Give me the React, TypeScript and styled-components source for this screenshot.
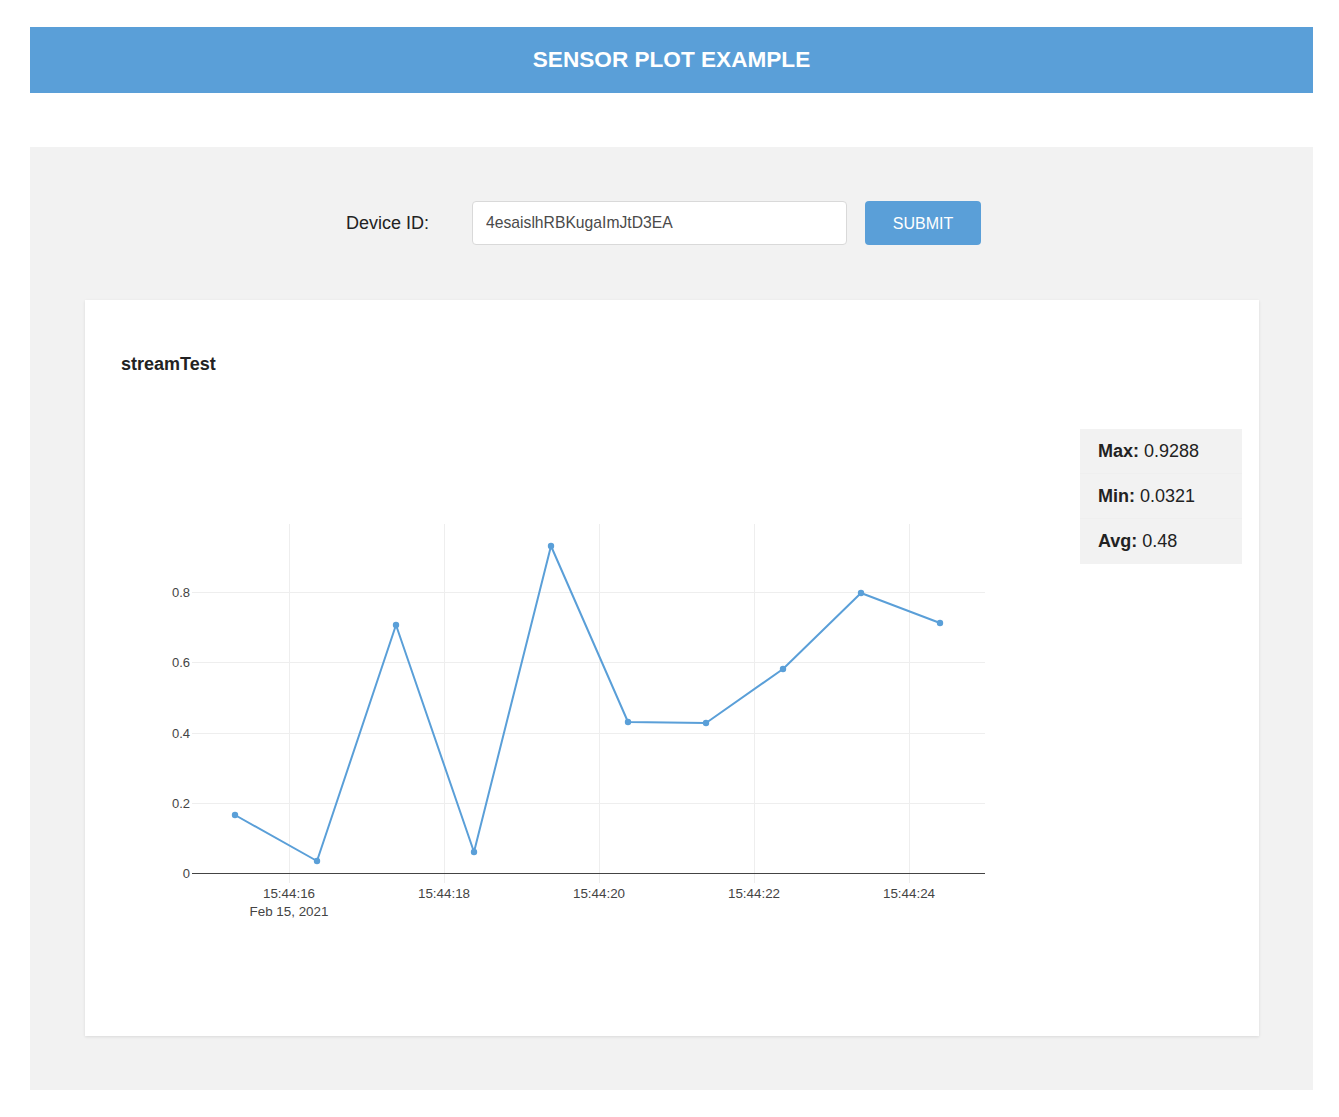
import React from "react";
import styled, { createGlobalStyle } from "styled-components";

const Global = createGlobalStyle`
  html, body { margin: 0; padding: 0; background: #fff; }
  body { font-family: "Liberation Sans", Arial, sans-serif; color: #222; }
`;

const Page = styled.div`
  padding: 27px 26px 27px 30px;
`;

const Header = styled.header`
  height: 66px;
  background: #5a9fd8;
  display: flex;
  align-items: center;
  justify-content: center;
  color: #fff;
  font-size: 22.6px;
  font-weight: 700;
  padding-bottom: 1px;
  box-sizing: border-box;
`;

const Panel = styled.main`
  margin-top: 54px;
  background: #f2f2f2;
  padding: 54px 54px 54px 55px;
`;

const FormRow = styled.form`
  display: flex;
  align-items: center;
  padding-left: 261px;
  height: 44px;
  margin-bottom: 55px;
`;

const Label = styled.label`
  font-size: 18px;
  color: #222;
  margin-right: 43px;
`;

const Input = styled.input`
  box-sizing: border-box;
  width: 375px;
  height: 44px;
  border: 1px solid #d9d9d9;
  border-radius: 4px;
  background: #fff;
  padding: 0 13px;
  font-family: "Liberation Sans", Arial, sans-serif;
  font-size: 15.7px;
  color: #4a4a4a;
  outline: none;
`;

const Button = styled.button`
  margin-left: 18px;
  width: 116px;
  height: 44px;
  border: none;
  border-radius: 4px;
  background: #5a9fd8;
  color: #fff;
  font-family: "Liberation Sans", Arial, sans-serif;
  font-size: 16px;
  padding-top: 2px;
`;

const Card = styled.section`
  background: #fff;
  height: 736px;
  box-sizing: border-box;
  padding: 53px 17px 0 36px;
  box-shadow: 0 1px 3px rgba(0, 0, 0, 0.1);
`;

const Title = styled.h2`
  margin: 0;
  font-size: 18px;
  font-weight: 700;
  line-height: 22px;
  color: #222;
`;

const Body = styled.div`
  display: flex;
  justify-content: space-between;
  align-items: flex-start;
  margin-top: 25px;
`;

const Stats = styled.ul`
  list-style: none;
  margin: 29px 0 0;
  padding: 0;
  width: 162px;
  background: #f2f2f2;
`;

const StatRow = styled.li<{ $last?: boolean }>`
  height: 45px;
  box-sizing: border-box;
  padding-left: 18px;
  display: flex;
  align-items: center;
  font-size: 18px;
  color: #222;
  border-bottom: ${(p) => (p.$last ? "none" : "1px solid #efefef")};
  b { margin-right: 5px; }
`;

const COLOR = "#5a9fd8";
const y0 = 473;
const perUnit = 351.25;
const yTicks = [0, 0.2, 0.4, 0.6, 0.8];
const xTicks = [
  { x: 168, label: "15:44:16", sub: "Feb 15, 2021" },
  { x: 323, label: "15:44:18" },
  { x: 478, label: "15:44:20" },
  { x: 633, label: "15:44:22" },
  { x: 788, label: "15:44:24" },
];
const pts: [number, number][] = [
  [114, 415], [196, 461], [275, 225], [353, 452], [430, 146],
  [507, 322], [585, 323], [662, 269], [740, 193], [819, 223],
];
const FONT = "Liberation Sans, Arial, sans-serif";

function Chart() {
  return (
    <svg width={900} height={540} style={{ display: "block" }}>
      {xTicks.map((t) => (
        <line key={t.x} x1={t.x + 0.5} x2={t.x + 0.5} y1={124} y2={483} stroke="#eeeeee" strokeWidth={1} />
      ))}
      {yTicks.slice(1).map((v) => {
        const y = Math.round(y0 - v * perUnit) + 0.5;
        return <line key={v} x1={71} x2={864} y1={y} y2={y} stroke="#eeeeee" strokeWidth={1} />;
      })}
      <line x1={71} x2={864} y1={y0 + 0.5} y2={y0 + 0.5} stroke="#444" strokeWidth={1} />
      {yTicks.map((v) => (
        <text
          key={v}
          x={69}
          y={Math.round(y0 - v * perUnit) + 4.5}
          textAnchor="end"
          fontSize={13}
          fill="#444"
          fontFamily={FONT}
        >
          {v === 0 ? "0" : v.toString()}
        </text>
      ))}
      {xTicks.map((t) => (
        <g key={t.label}>
          <text x={t.x} y={498} textAnchor="middle" fontSize={13.4} fill="#444" fontFamily={FONT}>
            {t.label}
          </text>
          {t.sub && (
            <text x={t.x} y={516} textAnchor="middle" fontSize={13.4} fill="#444" fontFamily={FONT}>
              {t.sub}
            </text>
          )}
        </g>
      ))}
      <polyline
        points={pts.map((p) => p.join(",")).join(" ")}
        fill="none"
        stroke={COLOR}
        strokeWidth={2}
        strokeLinejoin="round"
      />
      {pts.map((p, i) => (
        <circle key={i} cx={p[0]} cy={p[1]} r={3.2} fill={COLOR} />
      ))}
    </svg>
  );
}

export default function App() {
  return (
    <>
      <Global />
      <Page>
        <Header>SENSOR PLOT EXAMPLE</Header>
        <Panel>
          <FormRow onSubmit={(e) => e.preventDefault()}>
            <Label htmlFor="dev">Device ID:</Label>
            <Input id="dev" defaultValue="4esaislhRBKugaImJtD3EA" />
            <Button type="submit">SUBMIT</Button>
          </FormRow>
          <Card>
            <Title>streamTest</Title>
            <Body>
              <Chart />
              <Stats>
                <StatRow><b>Max:</b>0.9288</StatRow>
                <StatRow><b>Min:</b>0.0321</StatRow>
                <StatRow $last><b>Avg:</b>0.48</StatRow>
              </Stats>
            </Body>
          </Card>
        </Panel>
      </Page>
    </>
  );
}
